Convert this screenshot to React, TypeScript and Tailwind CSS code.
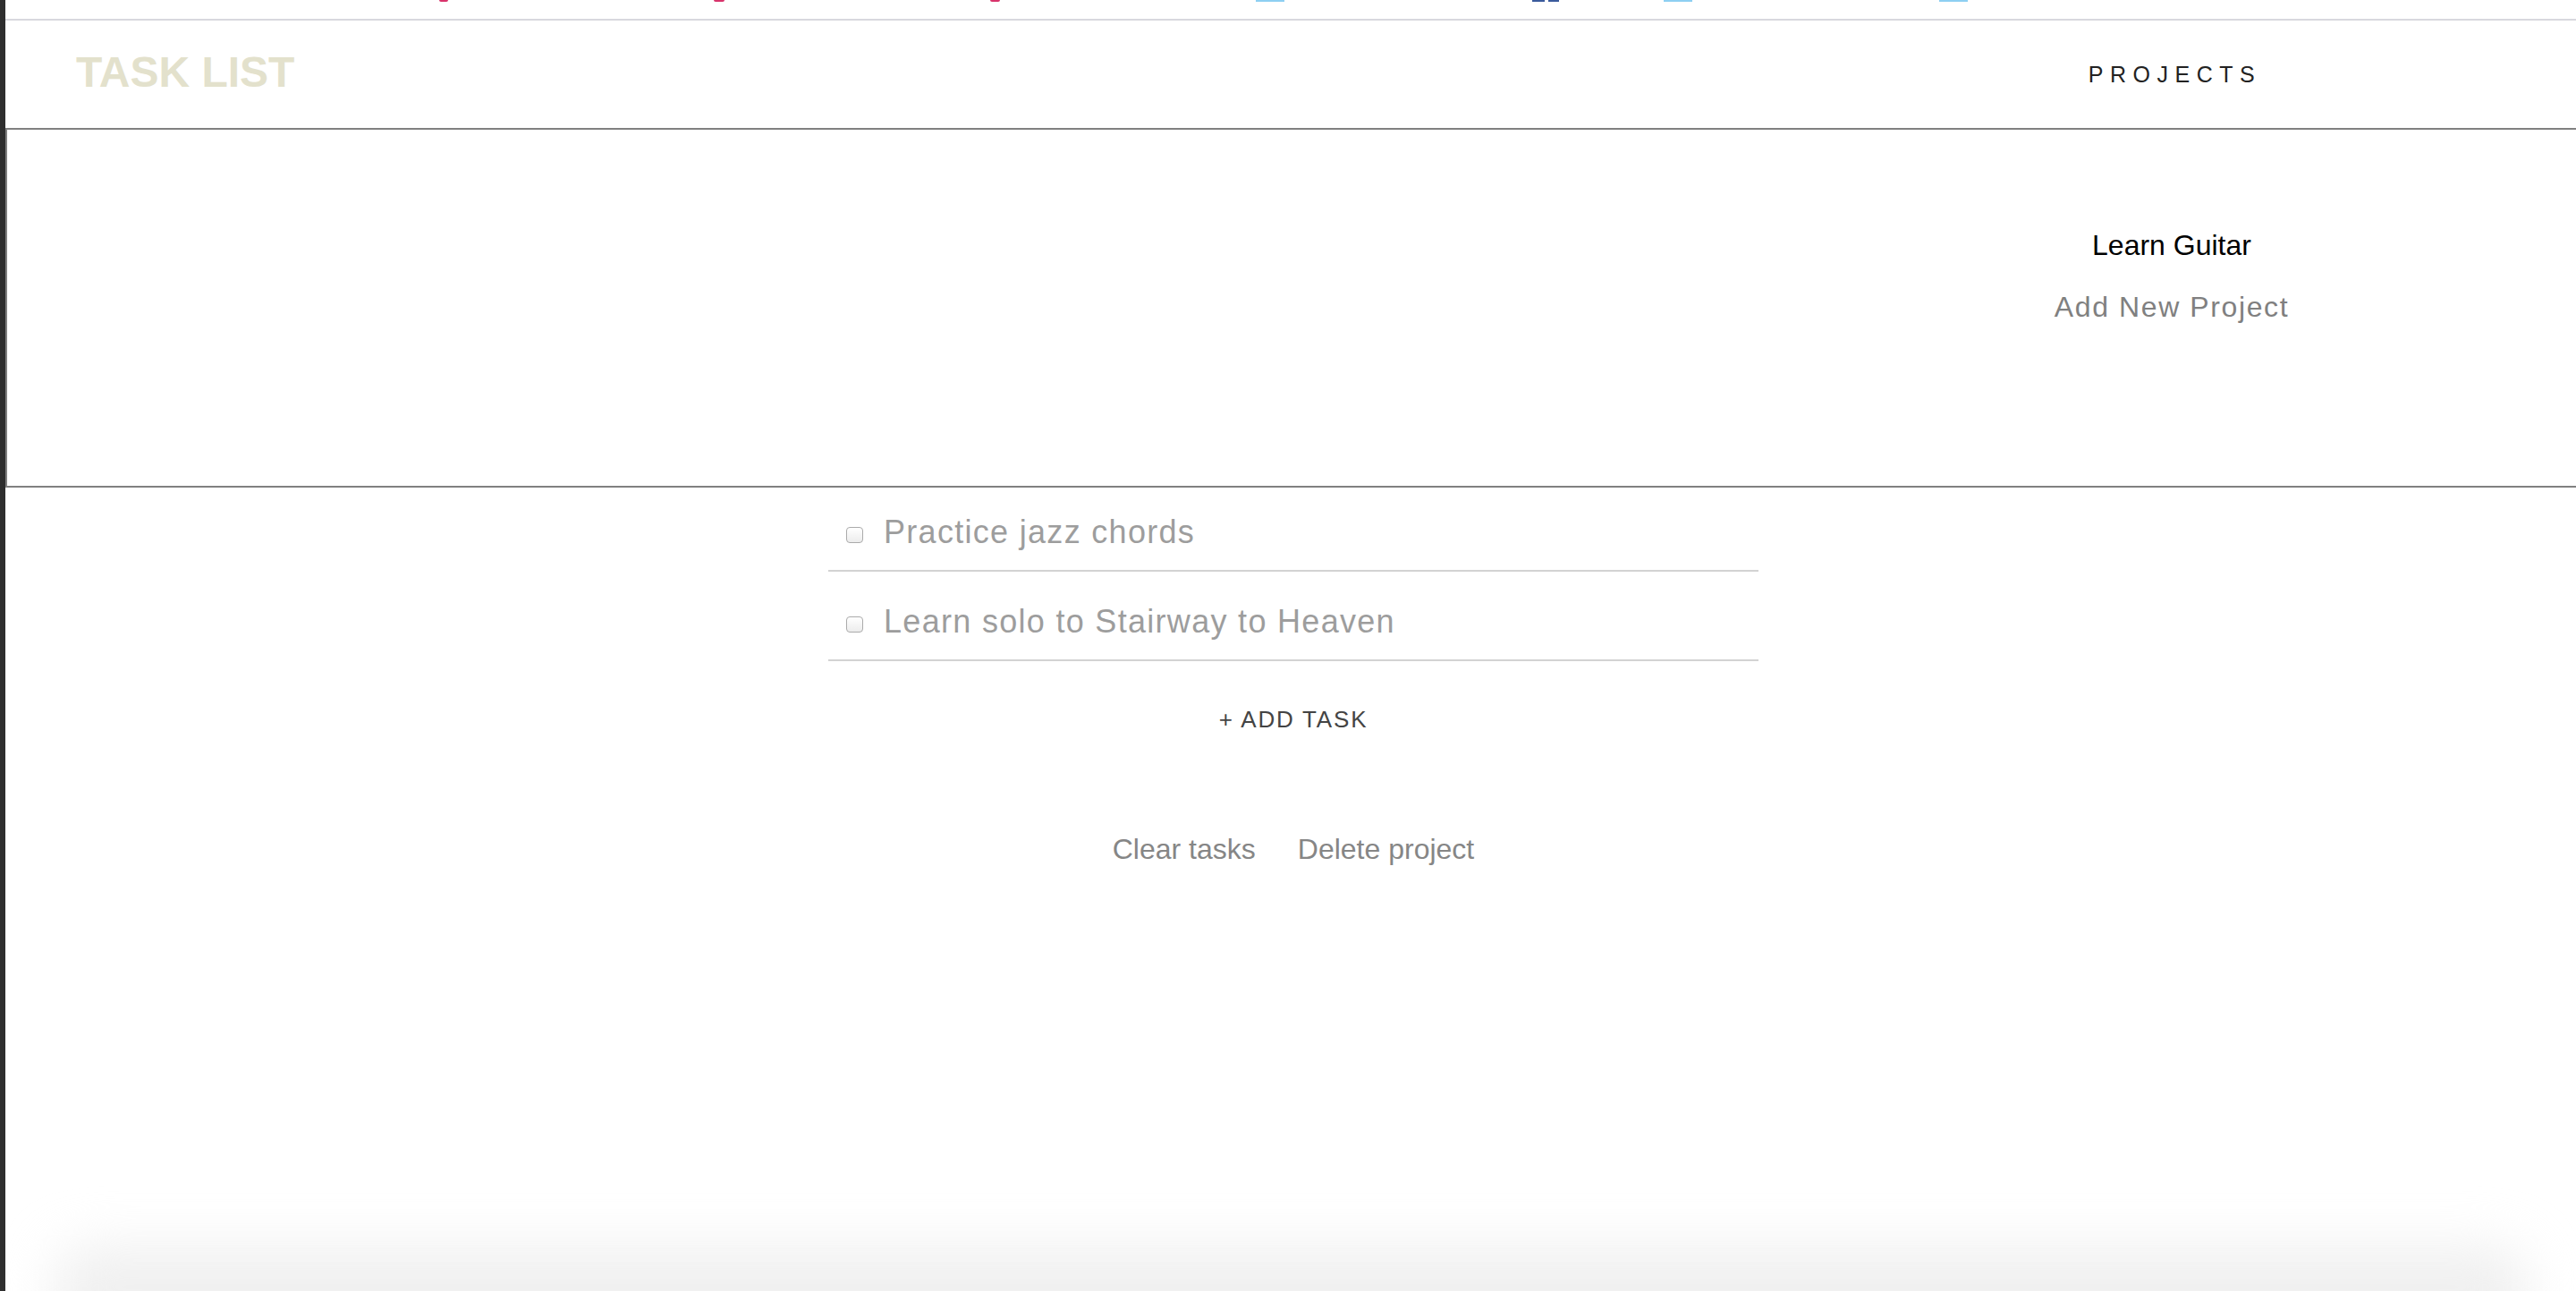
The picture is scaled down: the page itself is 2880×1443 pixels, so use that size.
import React from "react";

function TaskRow({ text }: { text: string }) {
  return (
    <div className="flex h-[100px] items-end border-b-2 border-[#d3d3d3] pb-[25px] pl-[20px]">
      <span className="mb-[5px] inline-block h-[18px] w-[19px] rounded-[4px] border border-[#ababab] bg-gradient-to-b from-white to-[#ececec]" />
      <span className="ml-[23px] text-[36px] leading-[34px] tracking-[1.3px] text-[#9d9d9d]">{text}</span>
    </div>
  );
}

export default function App() {
  return (
    <div className="relative flex h-[1443px] w-full overflow-hidden bg-white font-['Liberation_Sans',Arial,sans-serif]">
      <div className="w-[6px] shrink-0 bg-[#2e2e2e]" />
      <div className="relative flex min-w-0 flex-1 flex-col">
        {/* top strip with cut-off icons */}
        <div className="flex h-[23px] shrink-0 items-start border-b-2 border-[#d8d8de]">
          <span className="ml-[485px] h-[2px] w-[10px] rounded-b-full bg-[#d8336b]" />
          <span className="ml-[297px] h-[2px] w-[12px] rounded-b-full bg-[#d8336b]" />
          <span className="ml-[297px] h-[2px] w-[11px] rounded-b-full bg-[#d8336b]" />
          <span className="ml-[286px] h-[2px] w-[32px] bg-[#8ecff2]" />
          <span className="ml-[277px] flex h-[2px] w-[30px] gap-[4px]">
            <span className="h-full w-[14px] bg-[#3b5b9c]" />
            <span className="h-full w-[12px] bg-[#3b5b9c]" />
          </span>
          <span className="ml-[117px] h-[2px] w-[32px] bg-[#8ecff2]" />
          <span className="ml-[276px] h-[2px] w-[32px] bg-[#8ecff2]" />
        </div>

        {/* header */}
        <div className="flex h-[120px] shrink-0 items-start justify-between">
          <div className="pl-[79px] pt-[34px] text-[48px] font-bold leading-[48px] text-[#e3e1cc]">TASK LIST</div>
          <div className="flex w-[906px] justify-center pt-[48px]">
            <span className="pl-[9px] text-[25px] leading-[25px] tracking-[0.3em] text-[#222]">PROJECTS</span>
          </div>
        </div>

        {/* projects dropdown overlay */}
        <div className="absolute left-0 right-0 top-[143px] z-10 h-[402px] border-y-2 border-l-2 border-[#808080] bg-white">
          <div className="ml-auto flex w-[904px] flex-col items-center gap-[32px] pt-[111px]">
            <div className="text-[32px] leading-[37px] text-black">Learn Guitar</div>
            <div className="text-[32px] leading-[37px] tracking-[1.6px] text-[#808080]">Add New Project</div>
          </div>
        </div>

        {/* main content */}
        <div className="flex flex-col items-center pl-[6px] pt-[396px]">
          <div className="w-[1040px]">
            <TaskRow text="Practice jazz chords" />
            <TaskRow text="Learn solo to Stairway to Heaven" />
          </div>
          <div className="mt-[52px] text-[26px] leading-[26px] tracking-[1.8px] text-[#444]">+ ADD TASK</div>
          <div className="mt-[116px] flex gap-[47px] text-[32px] leading-[32px] text-[#868686]">
            <span>Clear tasks</span>
            <span>Delete project</span>
          </div>
        </div>

        {/* bottom window shadow */}
        <div className="pointer-events-none absolute bottom-[-80px] left-[55px] right-[55px] h-[130px] rounded-[40px] bg-[#f0f0f0] blur-[28px]" />
      </div>
    </div>
  );
}
